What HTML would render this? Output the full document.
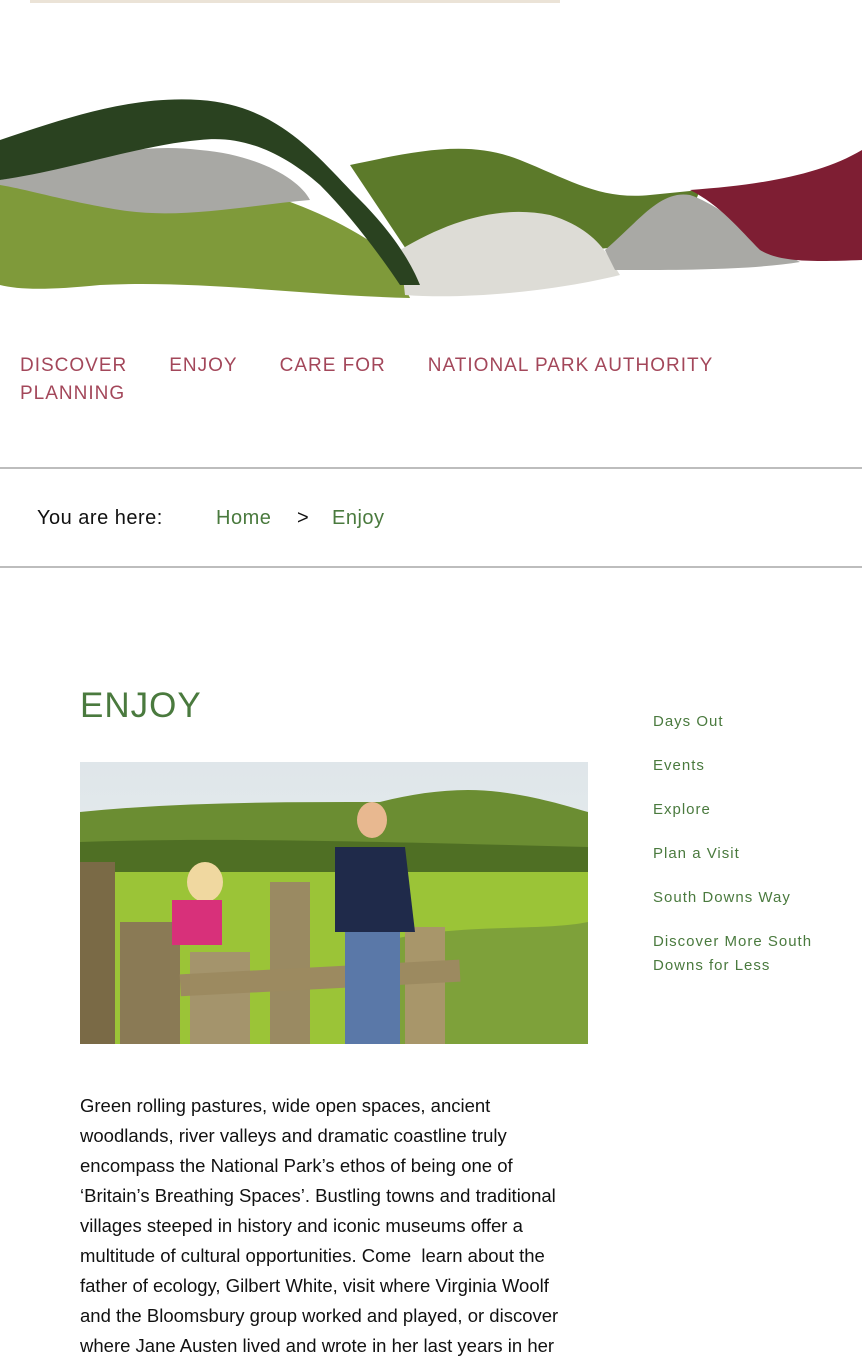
<!DOCTYPE html>
<html><head><meta charset="utf-8"><style>
body{margin:0;width:862px;height:1350px;overflow:hidden;background:#fff;font-family:"Liberation Sans",sans-serif;position:relative}
.nav{position:absolute;left:20px;top:352px;width:760px;color:#a3475a;font-size:19px;letter-spacing:1px;line-height:28px}
.nav span{margin-right:42px}
.hr{position:absolute;left:0;width:862px;height:2px;background:#bdbdbd}
.bc{position:absolute;top:507px;font-size:20px;letter-spacing:.5px}
.h1{position:absolute;left:80px;top:686px;font-size:35px;color:#4a7a3e;letter-spacing:1px;font-weight:normal}
.side{position:absolute;left:653px;top:710px;color:#4a7a3e;font-size:15px;letter-spacing:1px;line-height:24px}
.side div{margin-bottom:20px}
.p{position:absolute;left:80px;top:1091px;width:560px;font-size:18.5px;line-height:30px;color:#111;white-space:nowrap;letter-spacing:0}
</style></head><body>
<svg style="position:absolute;left:0;top:0" width="862" height="310">
<rect x="30" y="0" width="530" height="3" fill="#d8c8b0" opacity=".5"/>
<path d="M0 185 C80 180 150 160 200 175 C260 190 330 210 390 255 L410 298 C300 295 200 280 100 285 C50 290 20 290 0 285Z" fill="#7f9a3a"/>
<path d="M0 180 C60 170 120 140 200 150 C260 155 300 180 310 200 C250 205 180 220 120 210 C60 200 30 190 0 185Z" fill="#a8a8a4"/>
<path d="M350 165 C420 150 470 140 520 160 C570 180 600 200 650 195 L700 190 L680 240 C600 250 520 255 420 270 Z" fill="#5c7a2a"/>
<path d="M400 250 C450 220 500 205 550 215 C600 230 610 260 620 275 C560 290 470 300 405 295Z" fill="#dddcd6"/>
<path d="M605 250 C640 220 660 190 690 195 C720 205 760 240 800 262 C750 270 680 270 615 270Z" fill="#a9a9a5"/>
<path d="M690 190 C760 185 820 175 862 150 L862 260 C810 262 780 262 760 250 C740 230 720 205 690 190Z" fill="#7e1e33"/>
<path d="M0 140 C60 120 130 95 200 100 C280 105 320 160 360 200 C390 230 410 260 420 285 L400 285 C380 255 350 215 320 185 C280 150 240 135 200 140 C140 145 70 170 0 180Z" fill="#2a4220"/>
</svg>
<div class="nav"><span>DISCOVER</span><span>ENJOY</span><span>CARE FOR</span><span>NATIONAL PARK AUTHORITY</span><br>PLANNING</div>
<div class="hr" style="top:467px"></div>
<div class="bc" style="left:37px;color:#111">You are here:</div>
<div class="bc" style="left:216px;color:#4a7a3e">Home</div>
<div class="bc" style="left:297px;color:#111">&gt;</div>
<div class="bc" style="left:332px;color:#4a7a3e">Enjoy</div>
<div class="hr" style="top:566px"></div>
<div class="h1">ENJOY</div>
<svg style="position:absolute;left:80px;top:762px" width="508" height="282">
<defs><linearGradient id="sky" x1="0" y1="0" x2="0" y2="1"><stop offset="0" stop-color="#dfe6ea"/><stop offset="1" stop-color="#eef2f0"/></linearGradient></defs>
<rect width="508" height="282" fill="url(#sky)"/>
<path d="M0 50 C100 40 200 40 300 40 C340 30 380 25 420 30 C460 35 490 45 508 50 L508 110 L0 110Z" fill="#6b8d32"/>
<path d="M0 80 C150 75 300 80 508 85 L508 282 L0 282Z" fill="#4f6f24"/>
<path d="M0 110 L508 110 L508 282 L0 282Z" fill="#9bc437"/>
<path d="M300 180 C380 160 460 170 508 160 L508 282 L300 282Z" fill="#7ea13a"/>
<rect x="0" y="100" width="35" height="182" fill="#7a6a46"/>
<rect x="40" y="160" width="60" height="122" fill="#8a7a55"/>
<rect x="110" y="190" width="60" height="92" fill="#a4946c"/>
<rect x="190" y="120" width="40" height="162" fill="#9a8a62"/>
<rect x="325" y="165" width="40" height="117" fill="#a8966a"/>
<rect x="100" y="205" width="280" height="22" fill="#9c8a60" transform="rotate(-3 240 215)"/>
<ellipse cx="125" cy="120" rx="18" ry="20" fill="#f0d8a0"/>
<rect x="92" y="138" width="50" height="45" fill="#d8307a"/>
<ellipse cx="292" cy="58" rx="15" ry="18" fill="#e8b890"/>
<path d="M255 85 L325 85 L335 170 L255 170Z" fill="#1f2a4a"/>
<rect x="265" y="170" width="55" height="112" fill="#5a78a8"/>
</svg>
<div class="side"><div>Days Out</div><div>Events</div><div>Explore</div><div>Plan a Visit</div><div>South Downs Way</div><div>Discover More South<br>Downs for Less</div></div>
<div class="p">Green rolling pastures, wide open spaces, ancient<br>woodlands, river valleys and dramatic coastline truly<br>encompass the National Park’s ethos of being one of<br>‘Britain’s Breathing Spaces’. Bustling towns and traditional<br>villages steeped in history and iconic museums offer a<br>multitude of cultural opportunities. Come&nbsp; learn about the<br>father of ecology, Gilbert White, visit where Virginia Woolf<br>and the Bloomsbury group worked and played, or discover<br>where Jane Austen lived and wrote in her last years in her</div>
</body></html>
